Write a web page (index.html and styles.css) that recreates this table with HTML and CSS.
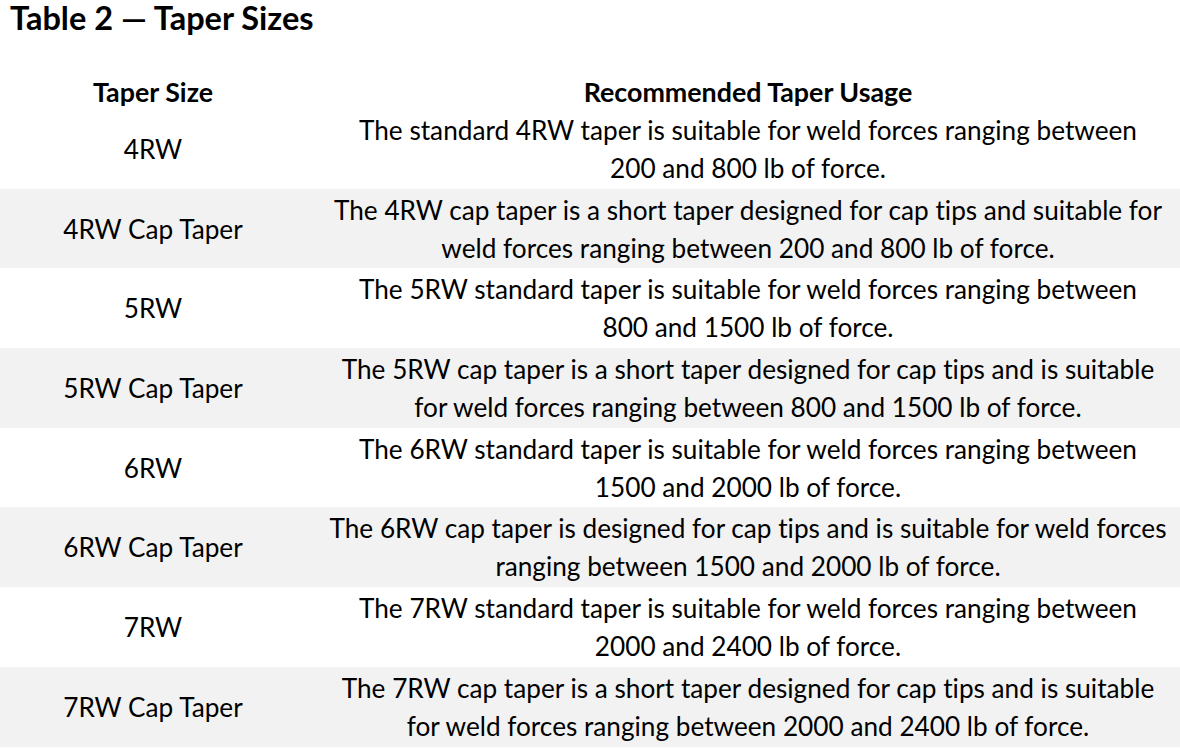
FILE: index.html
```html
<!DOCTYPE html>
<html lang="en">
<head>
<meta charset="utf-8">
<title>Table 2 — Taper Sizes</title>
<link rel="stylesheet" href="styles.css">
</head>
<body>
<h1 class="title">Table 2 — Taper Sizes</h1>
<table class="tapers">
  <colgroup><col class="col-size"><col class="col-usage"></colgroup>
  <thead>
    <tr><th>Taper Size</th><th class="usage">Recommended Taper Usage</th></tr>
  </thead>
  <tbody>
    <tr><td>4RW</td><td class="usage">The standard 4RW taper is suitable for weld forces ranging between<br>200 and 800 lb of force.</td></tr>
    <tr><td>4RW Cap Taper</td><td class="usage">The 4RW cap taper is a short taper designed for cap tips and suitable for<br>weld forces ranging between 200 and 800 lb of force.</td></tr>
    <tr><td>5RW</td><td class="usage">The 5RW standard taper is suitable for weld forces ranging between<br>800 and 1500 lb of force.</td></tr>
    <tr><td>5RW Cap Taper</td><td class="usage">The 5RW cap taper is a short taper designed for cap tips and is suitable<br>for weld forces ranging between 800 and 1500 lb of force.</td></tr>
    <tr><td>6RW</td><td class="usage">The 6RW standard taper is suitable for weld forces ranging between<br>1500 and 2000 lb of force.</td></tr>
    <tr><td>6RW Cap Taper</td><td class="usage">The 6RW cap taper is designed for cap tips and is suitable for weld forces<br>ranging between 1500 and 2000 lb of force.</td></tr>
    <tr><td>7RW</td><td class="usage">The 7RW standard taper is suitable for weld forces ranging between<br>2000 and 2400 lb of force.</td></tr>
    <tr><td>7RW Cap Taper</td><td class="usage">The 7RW cap taper is a short taper designed for cap tips and is suitable<br>for weld forces ranging between 2000 and 2400 lb of force.</td></tr>
  </tbody>
</table>
</body>
</html>
```
FILE: styles.css
```css
body {
  margin: 0;
  background: #fff;
  color: #000;
  font-family: Lato, "Liberation Sans", sans-serif;
  font-variant-ligatures: none;
}

.title {
  margin: 0;
  padding-left: 10px;
  font-size: 32.5px;
  line-height: 36px;
  font-weight: 700;
}

.tapers {
  width: 100%;
  margin-top: 38px;
  border-collapse: collapse;
  table-layout: fixed;
  font-size: 26.2px;
}

.col-size { width: 306px; }

.tapers th {
  height: 35px;
  padding: 0;
  font-size: 26.8px;
  font-weight: 700;
  text-align: center;
  vertical-align: middle;
  white-space: nowrap;
}

.tapers td {
  height: 79.7px;
  padding: 0;
  line-height: 38px;
  text-align: center;
  vertical-align: middle;
  white-space: nowrap;
}

.tapers .usage { padding-left: 10px; }

.tapers tbody tr:nth-child(even) { background: #f2f2f2; }
```
